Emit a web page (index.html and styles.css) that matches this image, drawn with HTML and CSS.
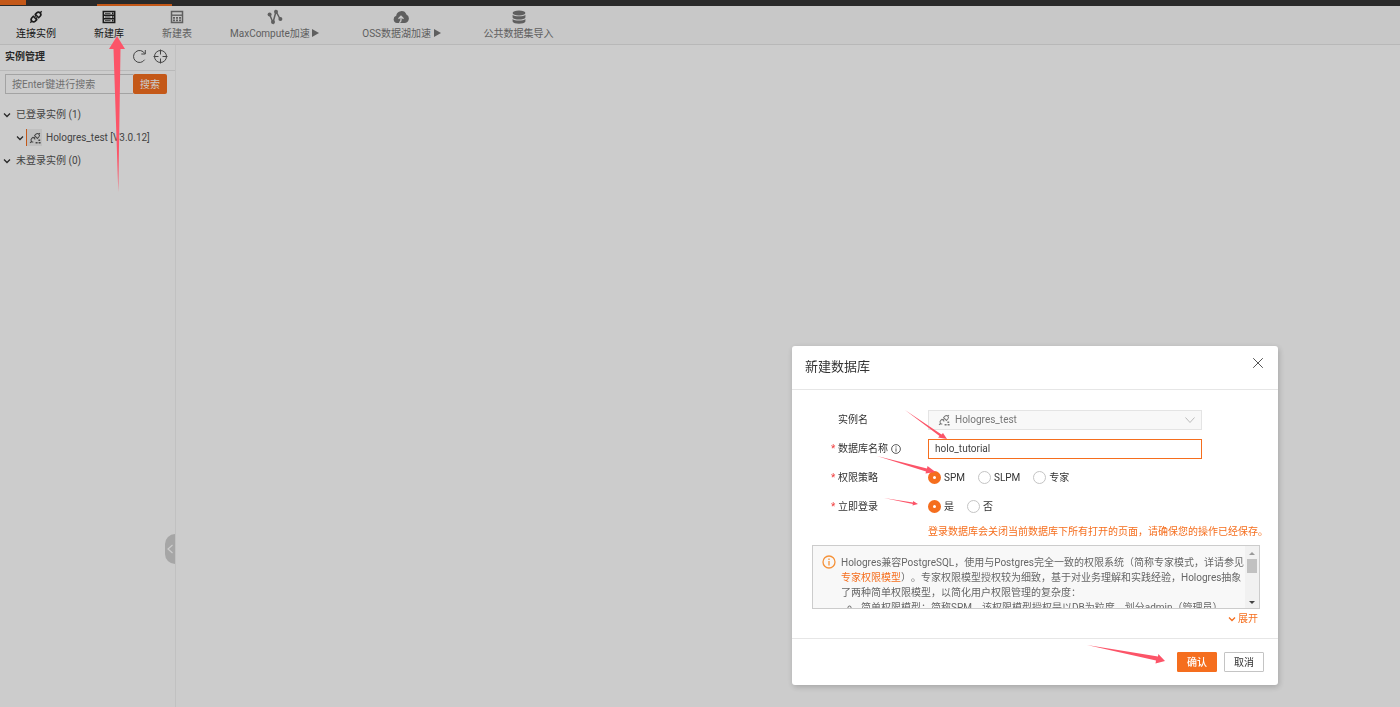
FILE: index.html
```html
<!DOCTYPE html>
<html lang="zh-CN">
<head>
<meta charset="utf-8">
<title>新建数据库</title>
<link rel="stylesheet" href="styles.css">
</head>
<body>
<svg width="0" height="0" class="defs" aria-hidden="true">
  <symbol id="plug" viewBox="0 0 14 14">
    <g fill="none" stroke="currentColor" stroke-width="1.6" transform="rotate(45 7 7)">
      <path d="M4.600 5.600V3.600a2.400 2.400 0 0 1 4.800 0v2zM4.600 8.400v2a2.400 2.400 0 0 0 4.800 0v-2z"/>
      <path d="M7 1.200V-1M7 12.800V15M5.800 5.600v2M8.200 6.400v2" stroke-width="1.400"/>
    </g>
  </symbol>
  <symbol id="instance" viewBox="0 0 12 12">
    <g fill="none" stroke="currentColor" transform="rotate(45 6 6)">
      <path d="M4 4.600V2.600a2 2 0 0 1 4 0v2zM4 6.800v2a2 2 0 0 0 3.600 1.200M4 6.800h3.200M6 .6V-1M6 10.800V13M5.200 4.600v2.200"/>
    </g>
    <path d="M6.600 10.800h2M9.600 10.800h2M9.400 8.200h1.800" stroke="currentColor" stroke-width="1.400"/>
  </symbol>
  <symbol id="down" viewBox="0 0 8 8"><path d="M1 2.500l3 3 3-3" fill="none" stroke="currentColor" stroke-width="1.300"/></symbol>
</svg>
<div class="app">
  <div class="topbar"><span class="topbar-logo"></span></div>
  <nav class="toolbar">
    <button class="tool strong"><svg width="14" height="14"><use href="#plug"/></svg><span>连接实例</span></button>
    <button class="tool strong active"><svg width="14" height="14" viewBox="0 0 14 14"><path d="M1.300 1.600h11.400v10.800H1.300zM1 5.200h12M1 8.800h12" fill="none" stroke="currentColor" stroke-width="1.500"/><path d="M3 3.400h5.500M3 7h5.500M3 10.600h5.500" stroke="currentColor" stroke-width=".8"/><path d="M10 3.400h1.500M10 7h1.500M10 10.600h1.500" stroke="currentColor" stroke-width="1.600"/></svg><span>新建库</span></button>
    <button class="tool"><svg width="14" height="14" viewBox="0 0 14 14"><path d="M1.500 1.600h11v10.800h-11z" fill="none" stroke="currentColor" stroke-width="1.500"/><path d="M1.500 5.200h11" stroke="currentColor" stroke-width="1.400"/><path d="M3 7.800h2M6 7.800h2M9 7.800h2M3 10.300h2M6 10.300h2M9 10.300h2" stroke="currentColor" stroke-width="1.700"/></svg><span>新建表</span></button>
    <button class="tool"><svg width="16" height="16" viewBox="0 0 16 16"><path d="M2.600 5.500l3.400 8 3-11 4.400 8" fill="none" stroke="currentColor" stroke-width="1.500"/><g fill="currentColor"><circle cx="2.600" cy="5.500" r="2"/><circle cx="6" cy="13" r="2"/><circle cx="9" cy="2.800" r="2"/><circle cx="13.400" cy="10" r="2"/></g></svg><span>MaxCompute加速 <i class="play"></i></span></button>
    <button class="tool gap"><svg width="16" height="14" viewBox="0 0 16 14"><path d="M4 13a3.700 3.700 0 0 1-.8-7.200A5.300 5.300 0 0 1 13.400 4.500 4.500 4.500 0 0 1 11.500 13z" fill="currentColor"/><path d="M8 6.500v3.500q0 2.200-1.800 2.500M5.500 8.800L8 6.200l2.500 2.600" fill="none" stroke="#fafafa" stroke-width="1.300"/></svg><span>OSS数据湖加速 <i class="play"></i></span></button>
    <button class="tool gap"><svg width="14" height="14" viewBox="0 0 14 14" fill="currentColor"><ellipse cx="7" cy="2.900" rx="6.400" ry="2.500"/><path d="M.6 4.700c1.500 2 11.300 2 12.800 0v2.700c-1 2.700-11.800 2.700-12.800 0zM.6 8.900c1.500 2 11.300 2 12.800 0v2.500c-1 3-11.800 3-12.800 0z"/></svg><span>公共数据集导入</span></button>
  </nav>
  <div class="main">
    <aside class="sidebar">
      <header class="side-head">
        <h2>实例管理</h2>
        <button class="icon-btn" aria-label="刷新"><svg width="15" height="15" viewBox="0 0 15 15" fill="none" stroke="currentColor"><path d="M12.600 10.700A6 6 0 1 1 12.800 4.600M13.300 1v4h-4"/></svg></button>
        <button class="icon-btn" aria-label="定位"><svg width="15" height="15" viewBox="0 0 15 15" fill="none" stroke="currentColor"><circle cx="7.500" cy="7.500" r="6"/><path d="M7.500 .5v5M7.500 9.500v5M.5 7.500h5M9.500 7.500h5"/></svg></button>
      </header>
      <form class="search">
        <input type="text" aria-label="搜索实例" placeholder="按Enter键进行搜索">
        <button type="button">搜索</button>
      </form>
      <ul class="tree">
        <li><svg class="caret" width="8" height="8"><use href="#down"/></svg>已登录实例 (1)</li>
        <li class="child"><svg class="caret" width="8" height="8"><use href="#down"/></svg><span class="badge"><svg width="12" height="12"><use href="#instance"/></svg></span>Hologres_test [V3.0.12]</li>
        <li><svg class="caret" width="8" height="8"><use href="#down"/></svg>未登录实例 (0)</li>
      </ul>
      <button class="collapse" aria-label="收起"><svg width="8" height="10" viewBox="0 0 8 10"><path d="M6.500 1L2 5l4.500 4" fill="none" stroke="#fff" stroke-width="1.200"/></svg></button>
    </aside>
    <main class="workspace"></main>
  </div>
</div>

<div class="overlay">
  <section class="dialog" role="dialog" aria-labelledby="dlg-title">
    <header class="dialog-head">
      <h1 id="dlg-title">新建数据库</h1>
      <button class="icon-btn close" aria-label="关闭"><svg width="12" height="12" viewBox="0 0 12 12"><path d="M1.200 1.200l9.600 9.600M10.800 1.200l-9.600 9.600" stroke="currentColor"/></svg></button>
    </header>
    <div class="dialog-body">
      <div class="row">
        <label class="label" for="inst">实例名</label>
        <div class="select">
          <svg class="select-icon" width="12" height="12"><use href="#instance"/></svg>
          <select id="inst" disabled><option>Hologres_test</option></select>
          <svg class="select-arrow" width="10" height="8" viewBox="0 0 10 8"><path d="M.5 1.500L5 6.500l4.500-5" fill="none" stroke="currentColor"/></svg>
        </div>
      </div>
      <div class="row">
        <label class="label required" for="db">数据库名称<svg width="10" height="10" viewBox="0 0 10 10"><circle cx="5" cy="5" r="4.400" fill="none" stroke="currentColor" stroke-width=".8"/><path d="M5 2.300v1.200M5 4.300v3.400" stroke="currentColor" stroke-width=".8"/></svg></label>
        <input class="text" id="db" type="text" value="holo_tutorial">
      </div>
      <div class="row" role="radiogroup" aria-labelledby="policy">
        <span class="label required" id="policy">权限策略</span>
        <div class="radios">
          <label><input type="radio" name="policy" checked>SPM</label>
          <label><input type="radio" name="policy">SLPM</label>
          <label><input type="radio" name="policy">专家</label>
        </div>
      </div>
      <div class="row" role="radiogroup" aria-labelledby="login">
        <span class="label required" id="login">立即登录</span>
        <div class="radios">
          <label><input type="radio" name="login" checked>是</label>
          <label><input type="radio" name="login">否</label>
        </div>
      </div>
      <p class="warn">登录数据库会关闭当前数据库下所有打开的页面，请确保您的操作已经保存。</p>
      <div class="note">
        <svg class="note-icon" width="14" height="14" viewBox="0 0 14 14"><circle cx="7" cy="7" r="6" fill="none" stroke="currentColor" stroke-width="1.300"/><path d="M7 3.500v1.400M7 6v4.500" stroke="currentColor" stroke-width="1.300"/></svg>
        <div class="note-text">
          Hologres兼容PostgreSQL，使用与Postgres完全一致的权限系统（简称专家模式，详请参见<br>
          <a href="#">专家权限模型</a>）。专家权限模型授权较为细致，基于对业务理解和实践经验，Hologres抽象<br>
          了两种简单权限模型，以简化用户权限管理的复杂度：
          <ul><li>简单权限模型：简称SPM，该权限模型授权是以DB为粒度，划分admin（管理员）</li></ul>
        </div>
        <div class="scroll" aria-hidden="true"><i class="up"></i><i class="thumb"></i><i class="dn"></i></div>
      </div>
      <a class="expand" href="#"><svg width="8" height="8"><use href="#down"/></svg>展开</a>
    </div>
    <footer class="dialog-foot">
      <button class="btn primary">确认</button>
      <button class="btn">取消</button>
    </footer>
  </section>
</div>

<svg class="marks" width="1400" height="707" viewBox="0 0 1400 707" aria-hidden="true">
  <g fill="#fc5468">
    <path d="M117 36l8 13h-4.500L118.300 192 113.500 49H109z"/>
    <path d="M905 410l36.500 24.500 1.500-1.500 4 6-9-1.500 1.500-1.500z"/>
    <path d="M877 456l50 12.500.500-2.500 8 6-10 1.500.500-2z"/>
    <path d="M884 498l29 4.500v-1.500l5 3-5.500 1.500.3-1.500z"/>
    <path d="M1087 645l71 11.500.300-2.500 6.700 7-9.500 2.500.500-3z"/>
  </g>
</svg>
</body>
</html>
```
FILE: styles.css
```css
* { box-sizing: border-box; }

body {
  margin: 0;
  font: 10px/15px Roboto, "Noto Sans CJK SC", sans-serif;
  color: #333;
  background: #fff;
}

button, input, select { font: inherit; color: inherit; }
button { cursor: pointer; }
h1, h2, p, ul { margin: 0; padding: 0; }
.defs { position: absolute; }

.app {
  height: 100vh;
  display: flex;
  flex-direction: column;
}

.topbar {
  height: 6px;
  background: #353535;
}
.topbar-logo {
  display: block;
  width: 26px;
  height: 5px;
  background: #f56e1e;
}

.toolbar {
  display: flex;
  gap: 38px;
  height: 39px;
  padding: 0 16px;
  background: #fafafa;
  border-bottom: 1px solid #e6e6e6;
}
.tool {
  position: relative;
  display: flex;
  flex-direction: column;
  align-items: center;
  gap: 1px;
  padding: 3px 0 0;
  border: 0;
  background: none;
  color: #777;
  white-space: nowrap;
}
.tool svg { height: 16px; }
.tool.strong { color: #222; }
.tool.gap { margin-left: 5px; }
.tool.active::before {
  content: "";
  position: absolute;
  top: -2px;
  left: 3px;
  width: 75px;
  height: 2px;
  background: #f56e1e;
}
.play {
  display: inline-block;
  border: solid transparent;
  border-width: 4px 0 4px 7px;
  border-left-color: #777;
}

.main {
  flex: 1;
  display: flex;
}
.sidebar {
  position: relative;
  width: 176px;
  border-right: 1px solid #f2f2f2;
}
.workspace { flex: 1; }

.side-head {
  display: flex;
  align-items: center;
  gap: 6px;
  height: 26px;
  padding: 0 7px 3px 5px;
  border-bottom: 1px solid #e8e8e8;
}
.side-head h2 {
  flex: 1;
  font-size: 10px;
  font-weight: 700;
}
.icon-btn {
  display: flex;
  padding: 0;
  border: 0;
  background: none;
  color: #555;
}

.search {
  display: flex;
  padding: 3px 8px 0 5px;
}
.search input {
  flex: 1;
  min-width: 0;
  height: 20px;
  padding: 0 6px;
  border: 1px solid #ccc;
  border-right: 0;
  background: #fff;
}
.search input::placeholder { color: #8c8c8c; opacity: 1; }
.search button {
  width: 34px;
  height: 20px;
  padding: 0;
  border: 0;
  border-radius: 2px;
  background: #f56e1e;
  color: #fff;
}

.tree {
  padding-top: 9px;
  list-style: none;
}
.tree li {
  display: flex;
  align-items: center;
  height: 23px;
  padding-left: 3px;
  color: #555;
  white-space: nowrap;
}
.tree .caret { margin-right: 5px; color: #333; }
.tree .child { padding-left: 16px; }
.tree .child .caret { margin-right: 2px; }
.badge {
  display: flex;
  align-items: center;
  justify-content: center;
  width: 16px;
  height: 17px;
  margin-right: 4px;
  border-left: 1px solid #f56e1e;
  background: #f0f0f0;
}

.collapse {
  position: absolute;
  right: 0;
  top: 489px;
  display: flex;
  align-items: center;
  width: 10px;
  height: 30px;
  padding: 0 1px;
  border: 0;
  border-radius: 10px 0 0 10px;
  background: #d0d0d0;
}

.overlay {
  position: fixed;
  inset: 0;
  display: flex;
  justify-content: flex-end;
  align-items: flex-end;
  padding: 0 122px 22px 0;
  background: rgba(0, 0, 0, .2);
}
.dialog {
  width: 486px;
  border-radius: 3px;
  background: #fff;
  box-shadow: 1px 2px 6px rgba(0, 0, 0, .2);
}
.dialog-head {
  display: flex;
  justify-content: space-between;
  align-items: flex-start;
  height: 44px;
  padding: 11px 14px 0 13px;
  border-bottom: 1px solid #e6e6e6;
}
.dialog-head h1 {
  font-size: 13px;
  font-weight: 400;
  line-height: 20px;
}

.dialog-body {
  display: flex;
  flex-direction: column;
  padding: 15px 18px 12px 20px;
}
.row {
  display: flex;
  align-items: center;
  height: 29px;
}
.label {
  display: flex;
  align-items: center;
  gap: 3px;
  width: 90px;
  margin-left: 26px;
}
.required { margin-left: 19px; width: 97px; }
.required::before {
  content: "*";
  width: 4px;
  color: #f04040;
}
.select {
  position: relative;
  width: 274px;
  color: #777;
}
.select select {
  display: block;
  width: 100%;
  height: 20px;
  padding: 0 26px;
  border: 1px solid #e4e4e4;
  border-radius: 0;
  background: #f8f8f8;
  color: #777;
  opacity: 1;
  appearance: none;
}
.select-icon { position: absolute; left: 10px; top: 4px; }
.select-arrow { position: absolute; right: 7px; top: 6px; color: #bbb; }
.text {
  width: 274px;
  height: 20px;
  padding: 0 6px;
  border: 1px solid #f56e1e;
  outline: 0;
  color: #444;
}

.radios { display: flex; gap: 13px; }
.radios label {
  display: flex;
  align-items: center;
  gap: 3px;
}
.radios input {
  width: 13px;
  height: 13px;
  margin: 0;
  border: 1px solid #c4c4c4;
  border-radius: 50%;
  appearance: none;
}
.radios input:checked {
  border: 5px solid #f56e1e;
  background: #fff;
}

.warn {
  margin: 3px 0 6px 116px;
  color: #f56e1e;
  white-space: nowrap;
}

.note {
  display: flex;
  height: 64px;
  border: 1px solid #ccc;
  background: #f8f8f8;
  color: #666;
  overflow: hidden;
}
.note-icon { flex: none; margin: 9px 5px 0 9px; color: #f5923a; }
.note-text {
  flex: 1;
  min-width: 0;
  padding-top: 9px;
  white-space: nowrap;
  text-spacing-trim: space-all;
}
.note ul { padding-left: 20px; list-style: circle; }
a { color: #f56e1e; text-decoration: none; }
.scroll {
  display: flex;
  flex-direction: column;
  align-items: center;
  width: 14px;
  padding: 6px 0 4px;
  background: #f1f1f1;
}
.scroll .up { border: 3px solid transparent; border-top: 0; border-bottom-color: #999; }
.scroll .thumb { width: 10px; height: 14px; margin-top: 4px; background: #c1c1c1; }
.scroll .dn { margin-top: auto; border: 3px solid transparent; border-bottom: 0; border-top-color: #444; }

.expand {
  display: flex;
  align-items: center;
  align-self: flex-end;
  gap: 2px;
  margin: 2px 2px 0 0;
}

.dialog-foot {
  display: flex;
  justify-content: flex-end;
  gap: 7px;
  padding: 13px 14px;
  border-top: 1px solid #e6e6e6;
}
.btn {
  width: 40px;
  height: 20px;
  padding: 0;
  border: 1px solid #c4c4c4;
  border-radius: 1px;
  background: #fff;
}
.btn.primary { border-color: #f56e1e; background: #f56e1e; color: #fff; font-weight: 500; }

.marks {
  position: absolute;
  top: 0;
  left: 0;
  pointer-events: none;
}
```
